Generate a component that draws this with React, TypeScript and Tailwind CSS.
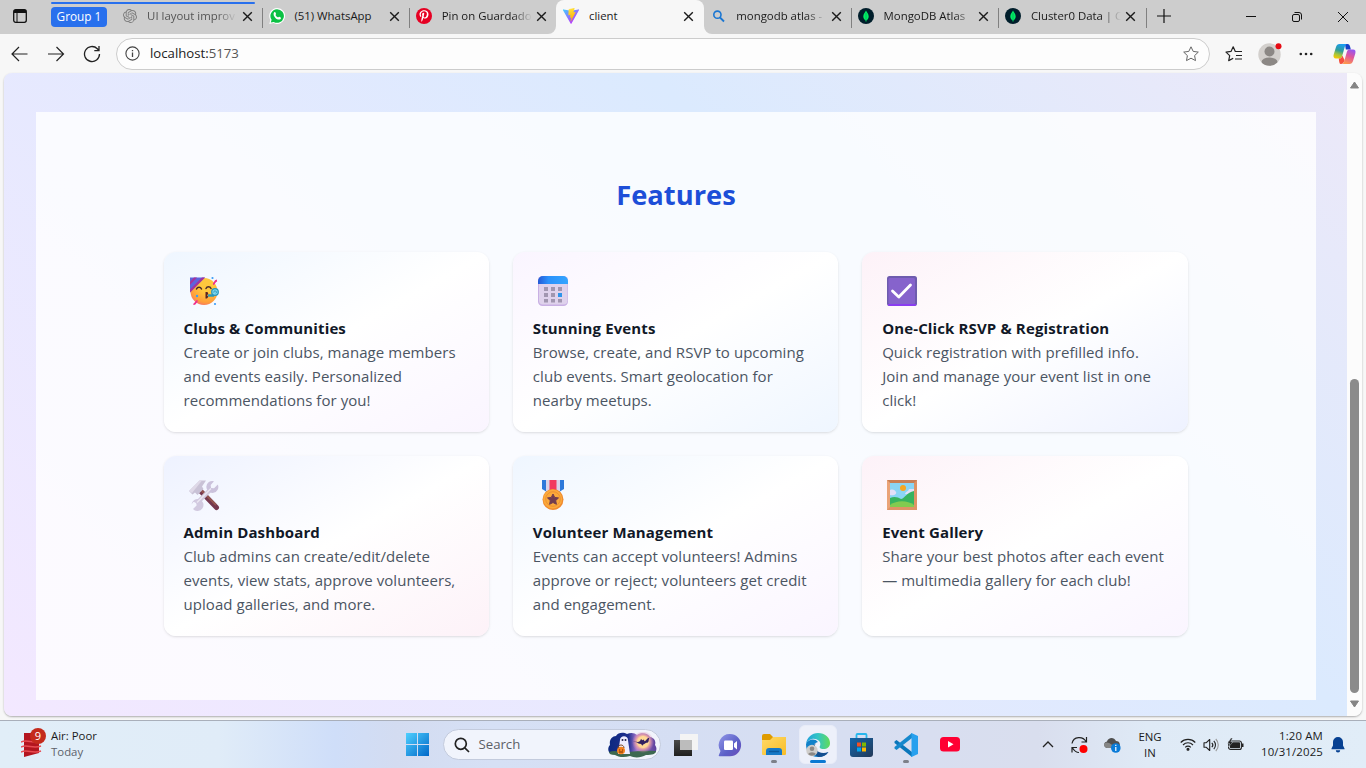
import React from "react";
import { FaWhatsapp, FaPinterestP } from "react-icons/fa";
import { SiOpenai } from "react-icons/si";

const CloseX = () => (
  <svg width="11" height="11" viewBox="0 0 11 11" className="shrink-0">
    <path d="M1.2 1.2 9.8 9.8M9.8 1.2 1.2 9.8" stroke="#1a1a1a" strokeWidth="1.4" fill="none" />
  </svg>
);

const ViteLogo = () => (
  <svg width="16" height="16" viewBox="0 0 32 32">
    <defs>
      <linearGradient id="va" x1="0" y1="0" x2="0.7" y2="0.9">
        <stop offset="0" stopColor="#41d1ff" />
        <stop offset="1" stopColor="#bd34fe" />
      </linearGradient>
      <linearGradient id="vb" x1="0.4" y1="0" x2="0.6" y2="1">
        <stop offset="0" stopColor="#ffea83" />
        <stop offset="0.1" stopColor="#ffdd35" />
        <stop offset="1" stopColor="#ffa800" />
      </linearGradient>
    </defs>
    <path d="M31.9 4.4 17 31.2a1 1 0 0 1-1.8 0L0 4.4a1 1 0 0 1 1.1-1.6L16 5.5l14.8-2.7a1 1 0 0 1 1.1 1.6z" fill="url(#va)" />
    <path d="M22.7 0 11.7 2.2a.4.4 0 0 0-.3.4l-.7 11.6a.4.4 0 0 0 .5.4l3.1-.7c.3 0 .5.2.5.5l-.9 4.5c-.1.3.2.6.5.5l1.9-.6c.3 0 .6.2.5.5l-1.500 7c0 .5.5.7.8.3l9-18c.2-.3-.1-.6-.4-.6l-3.200.6c-.3.1-.6-.2-.5-.5l2.100-7.200c.1-.3-.2-.6-.4-.9z" fill="url(#vb)" />
  </svg>
);

const MongoLogo = () => (
  <svg width="16" height="16" viewBox="0 0 16 16">
    <circle cx="8" cy="8" r="8" fill="#001e2b" />
    <path d="M8 2.4C9 4.5 10.7 5.8 10.7 8.5 10.7 10.7 9.3 11.8 8.3 12.5V13.8H7.7V12.5C6.7 11.8 5.3 10.7 5.3 8.5 5.3 5.8 7 4.5 8 2.4Z" fill="#00ed64" />
    <path d="M8 5v7.5" stroke="#00a35c" strokeWidth=".6" />
  </svg>
);

const WhatsLogo = () => (
  <svg width="16" height="16" viewBox="0 0 16 16">
    <path d="M8 0a8 8 0 1 1-3.600 15.100L.3 16l1-4A8 8 0 0 1 8 0z" fill="#fff" />
    <path d="M8 1.200a6.800 6.800 0 1 1-3.300 12.700l-2.900.7.800-2.800A6.800 6.800 0 0 1 8 1.200z" fill="#0bc144" />
    <path d="M5.200 4.300c.6-.5 1.100-.3 1.300.2l.5 1.200c.2.500-.5.800-.5 1.200.5 1.200 1.400 2 2.600 2.500.4 0 .7-.8 1.200-.6l1.400.7c.5.300.3 1.300-.3 1.700-1.500 1-3.600 0-5-1.300C4.900 8.500 3.800 5.900 5.200 4.300z" fill="#fff" />
  </svg>
);

const PinLogo = () => (
  <span className="flex h-4 w-4 items-center justify-center rounded-full bg-[#e60023] text-white">
    <FaPinterestP size={12} />
  </span>
);

const FindLogo = () => (
  <svg width="16" height="16" viewBox="0 0 16 16">
    <circle cx="6.4" cy="6.7" r="3.6" fill="none" stroke="#1a76d2" strokeWidth="1.6" />
    <path d="m9 9.5 4 4" stroke="#1a76d2" strokeWidth="1.8" />
  </svg>
);

type TabData = { title: string; icon: React.ReactNode; active?: boolean; line?: boolean; muted?: boolean };

const tabs: TabData[] = [
  { title: "UI layout improv", icon: <SiOpenai size={14} color="#7c7c7c" />, muted: true },
  { title: "(51) WhatsApp", icon: <WhatsLogo />, line: true },
  { title: "Pin on Guardado", icon: <PinLogo />, line: true },
  { title: "client", icon: <ViteLogo />, active: true },
  { title: "mongodb atlas -", icon: <FindLogo /> },
  { title: "MongoDB Atlas", icon: <MongoLogo />, line: true },
  { title: "Cluster0 Data | C", icon: <MongoLogo />, line: true },
];

function Tab({ t }: { t: TabData }) {
  const faded = t.title !== "(51) WhatsApp" && !t.active;
  return (
    <div className={`relative flex h-[34px] w-[147.3px] shrink-0 items-start ${t.active ? "rounded-t-lg bg-[#f7f7f7]" : ""}`}>
      {t.active && (
        <>
          <svg className="absolute bottom-0 -left-2" width="8" height="8"><path d="M8 0v8H0a8 8 0 0 0 8-8z" fill="#f7f7f7" /></svg>
          <svg className="absolute -right-2 bottom-0" width="8" height="8"><path d="M0 0v8h8a8 8 0 0 1-8-8z" fill="#f7f7f7" /></svg>
        </>
      )}
      <span className={`mt-2 h-5 w-px shrink-0 ${t.line ? "bg-[#808080]" : "bg-transparent"}`} />
      <span className="mt-2 ml-1.5 flex h-4 w-4 shrink-0 items-center justify-center">{t.icon}</span>
      <span className={`mt-1.5 ml-[9.5px] w-[90px] shrink-0 text-[11.4px] leading-5 whitespace-nowrap ${faded ? "[mask-image:linear-gradient(to_right,black_78%,transparent_100%)]" : ""} ${t.muted ? "text-[#555]" : "text-[#1a1a1a]"}`}>
        {t.title}
      </span>
      <span className="mt-[11px] ml-[4.5px]"><CloseX /></span>
    </div>
  );
}

const Party = () => (
  <svg width="32" height="32" viewBox="0 0 32 32">
    <defs>
      <radialGradient id="pf" cx=".6" cy=".3" r=".8"><stop offset=".3" stopColor="#ffc83d" /><stop offset=".75" stopColor="#ff9f3a" /><stop offset="1" stopColor="#f3607a" /></radialGradient>
    </defs>
    <circle cx="16" cy="16.5" r="13.5" fill="url(#pf)" />
    <path d="M2 2.5h15L2 17.5z" fill="#5d63dd" />
    <path d="M6 2.5 2 7v3l7-7.500zM14 2.5 2 14.5v3l15-15z" fill="#a5339b" />
    <path d="M8.500 14c1-2.5 4-2.5 5 0M18 13.5c1-2.5 4-2.5 5 0" stroke="#4a2a2a" strokeWidth="1.5" fill="none" strokeLinecap="round" />
    <path d="M17.500 17c3-.5 3.5 2 1.500 3.2 2 1 1 3.500-1.500 3.300z" fill="#5a2323" />
    <path d="M20 20.5h6" stroke="#2b9ab8" strokeWidth="2.500" />
    <circle cx="27" cy="17" r="3.3" fill="#7fd6ec" stroke="#2496bd" strokeWidth="1.2" />
    <path d="M25.800 17.500a1.300 1.300 0 1 1 2 .8" stroke="#2496bd" fill="none" />
    <path d="M25 9c2 0 1-3 4-3.500M5.500 29c2.500.5 2-3 4-3" stroke="#ef2f8c" strokeWidth="1.8" fill="none" />
    <circle cx="24.5" cy="3" r="1.1" fill="#3b9cf5" /><circle cx="27" cy="29" r="1.1" fill="#3b9cf5" /><circle cx="9" cy="21" r="1.2" fill="#3b9cf5" />
  </svg>
);

const CalendarArt = () => (
  <svg width="32" height="32" viewBox="0 0 32 32">
    <defs><linearGradient id="ca"><stop offset="0" stopColor="#2459d6" /><stop offset=".35" stopColor="#2b91fb" /><stop offset="1" stopColor="#35a5ff" /></linearGradient></defs>
    <rect x="1" y="1" width="30" height="30" rx="4.5" fill="#c9b0e4" />
    <rect x="2" y="2" width="28.5" height="27.5" rx="4" fill="#dfd2ec" />
    <path d="M1 9V6a5 5 0 0 1 5-5h20a5 5 0 0 1 5 5v3z" fill="url(#ca)" />
    <path d="M7 12h4v4H7zM14 12h4v4h-4zM21 12h4v4h-4zM7 18h4v4H7zM14 18h4v4h-4zM7 24h4v3.5H7zM14 24h4v3.5h-4zM21 24h4v3.5h-4z" fill="#a196b0" />
    <path d="M21 18h4v4h-4z" fill="#2f94ea" />
  </svg>
);

const CheckArt = () => (
  <svg width="32" height="32" viewBox="0 0 32 32">
    <rect x="1" y="1" width="30" height="30" rx="2.5" fill="#6e5cae" />
    <rect x="2.5" y="3" width="26.5" height="26" rx="1.5" fill="#8663cc" />
    <path d="M2 29h28v.5a1.500 1.500 0 0 1-1.500 1.500h-25A1.500 1.500 0 0 1 2 29.5z" fill="#8a3df0" />
    <path d="m6.500 16 6.300 6L24.500 10" stroke="#fff" strokeWidth="2.8" fill="none" strokeLinecap="round" strokeLinejoin="round" />
  </svg>
);

const ToolsArt = () => (
  <svg width="32" height="32" viewBox="0 0 32 32">
    <path d="M13 12.500 28.500 28.500" stroke="#75384f" strokeWidth="5" strokeLinecap="round" />
    <path d="m13 11 15 15" stroke="#95554f" strokeWidth="1.800" />
    <path d="M1 12 11.500 1.500H18l-4 6 1.500 2.500-6 6-2.500-2.500-2.500 2z" fill="#c9c2d6" />
    <path d="M1 12 11.500 1.500H14L4 14z" fill="#dfd9e8" />
    <path d="M8.500 24.500 23.500 9.500" stroke="#d3cbe0" strokeWidth="4.500" />
    <path d="M29.800 5.500 26 9.300l-3-.300-.3-3L26 2.200a6 6 0 1 0 3.800 3.300z" fill="#cbc2dc" />
    <path d="m5 30 3.600-3.600-.3-3-3-.3L3.500 25.500A6 6 0 1 1 5 30z" fill="#d2cae0" />
    <path d="M9 23.500 23 9.500" stroke="#ebe7f2" strokeWidth="1.500" />
  </svg>
);

const MedalArt = () => (
  <svg width="32" height="32" viewBox="0 0 32 32">
    <path d="M5 1h22v9l-5 3H10l-5-3z" fill="#2e79da" />
    <path d="M9 1h14v11H9z" fill="#d9d2e8" />
    <path d="M12.500 1h7v10h-7z" fill="#f2395e" />
    <circle cx="16" cy="20.5" r="10.5" fill="#f08a2f" />
    <circle cx="15.7" cy="20" r="9.5" fill="#fba93b" />
    <circle cx="16" cy="20" r="7.3" fill="none" stroke="#ed9131" />
    <path d="m16 15 1.700 3.400 3.800.5-2.800 2.700.7 3.700-3.400-1.800-3.400 1.800.7-3.700-2.800-2.700 3.800-.5z" fill="#713c4f" stroke="#713c4f" strokeLinejoin="round" />
  </svg>
);

const FrameArt = () => (
  <svg width="32" height="32" viewBox="0 0 32 32">
    <rect x="1" y="1" width="30" height="30" fill="#de9365" />
    <path d="M1 1h30l-3 3H4z" fill="#c87f56" /><path d="M1 31V1l3 3v24z" fill="#eaa377" />
    <rect x="4" y="4" width="24" height="24" fill="#8ad5f5" />
    <circle cx="17" cy="9" r="3" fill="#f5a623" />
    <path d="M4 11c3-1 5 0 6 2s-2 4-6 3zM19 15c1-3 3-2 4-5h5v6z" fill="#e2dff8" />
    <path d="M4 19c4-2 8-1 11 1 3 0 6-7 13-8v16H4z" fill="#36b35f" />
    <path d="M4 26c7-5 17-5 24 0v2H4z" fill="#82cb4f" />
  </svg>
);

const features = [
  { icon: <Party />, bg: "from-[#eff6ff] to-[#faf5ff]", title: "Clubs & Communities", lines: ["Create or join clubs, manage members", "and events easily. Personalized", "recommendations for you!"] },
  { icon: <CalendarArt />, bg: "from-[#faf5ff] to-[#eff6ff]", title: "Stunning Events", lines: ["Browse, create, and RSVP to upcoming", "club events. Smart geolocation for", "nearby meetups."] },
  { icon: <CheckArt />, bg: "from-[#fdf2f8] to-[#eef2ff]", title: "One-Click RSVP & Registration", lines: ["Quick registration with prefilled info.", "Join and manage your event list in one", "click!"] },
  { icon: <ToolsArt />, bg: "from-[#eef2ff] to-[#fdf2f8]", title: "Admin Dashboard", lines: ["Club admins can create/edit/delete", "events, view stats, approve volunteers,", "upload galleries, and more."] },
  { icon: <MedalArt />, bg: "from-[#eff6ff] to-[#faf5ff]", title: "Volunteer Management", lines: ["Events can accept volunteers! Admins", "approve or reject; volunteers get credit", "and engagement."] },
  { icon: <FrameArt />, bg: "from-[#fdf2f8] to-[#faf5ff]", title: "Event Gallery", lines: ["Share your best photos after each event", "— multimedia gallery for each club!"] },
];

function Toolbar() {
  return (
    <div className="flex h-[39px] shrink-0 items-center bg-[#f7f7f7]">
      <div className="flex w-9 justify-end pr-2">
        <svg width="17" height="16" viewBox="0 0 17 16" fill="none" stroke="#222" strokeWidth="1.2"><path d="M16.500 8H1M8 1 1 8l7 7" /></svg>
      </div>
      <div className="ml-3 flex w-[17px]">
        <svg width="17" height="16" viewBox="0 0 17 16" fill="none" stroke="#222" strokeWidth="1.2"><path d="M0 8H15.500M8.500 1l7 7-7 7" /></svg>
      </div>
      <div className="ml-[18px] w-[18px]">
        <svg width="18" height="18" viewBox="0 0 18 18" fill="none" stroke="#222" strokeWidth="1.3"><path d="M16.500 9A7.500 7.500 0 1 1 14.300 3.700L16 5.500M16 1v4.700h-4.700" /></svg>
      </div>
      <div className="ml-[15px] flex h-8 w-[1094px] items-center rounded-full border border-[#cccccc] bg-[#fdfdfd] pr-2.5 pl-2">
        <svg width="15" height="15" viewBox="0 0 15 15" fill="none" stroke="#444"><circle cx="7.5" cy="7.5" r="6.6" strokeWidth="1.1" /><path d="M7.500 6.500v4.500M7.500 4v1.300" strokeWidth="1.3" /></svg>
        <span className="ml-[10px] pt-px text-[13.2px] text-[#222]">localhost:<span className="text-[#555]">5173</span></span>
        <svg className="ml-auto" width="16" height="16" viewBox="0 0 16 16" fill="none" stroke="#666" strokeLinejoin="round"><path d="m8 .8 2.200 4.600 5.100.7-3.700 3.500.9 5L8 12.200l-4.500 2.400.9-5L.7 6.100l5.100-.7z" /></svg>
      </div>
      <svg className="ml-[15px]" width="18" height="16" viewBox="0 0 18 16" fill="none" stroke="#222" strokeLinejoin="round"><path d="M11 5.500h-.7L8.200.8 6 5.400l-5 .7 3.700 3.500-1 5 4.500-2.400M10.500 5.500H17M11 9.500h6M10 13h7" strokeWidth="1.2" /></svg>
      <svg className="ml-[15px]" width="24" height="24" viewBox="0 0 24 24"><defs><clipPath id="av"><circle cx="11.5" cy="12.5" r="11.2" /></clipPath></defs><circle cx="11.5" cy="12.5" r="11.2" fill="#d3d0cd" /><g clipPath="url(#av)" fill="#8c8885"><circle cx="11.5" cy="9.500" r="5" /><ellipse cx="11.5" cy="20" rx="8" ry="4.500" /></g><circle cx="20.5" cy="4.300" r="3" fill="#e60b14" /></svg>
      <svg className="ml-[17px]" width="14" height="4" viewBox="0 0 14 4" fill="#222"><circle cx="1.800" cy="2" r="1.300" /><circle cx="7" cy="2" r="1.300" /><circle cx="12.200" cy="2" r="1.300" /></svg>
      <svg className="ml-[20px]" width="23" height="22" viewBox="0 0 23 22">
        <defs>
          <linearGradient id="c1" x1=".6" y1="0" x2=".3" y2="1"><stop offset="0" stopColor="#1a9df2" /><stop offset=".45" stopColor="#2f9d9a" /><stop offset=".75" stopColor="#a8c63a" /><stop offset="1" stopColor="#f6c800" /></linearGradient>
          <linearGradient id="c2" x1=".7" y1="0" x2=".3" y2="1"><stop offset="0" stopColor="#9655f2" /><stop offset=".45" stopColor="#e0559b" /><stop offset="1" stopColor="#ff9a4a" /></linearGradient>
        </defs>
        <path d="M12 1h2.500c1.500 0 2.200 1 2.700 3l.6 2.500h-5z" fill="#1541c8" />
        <path d="M6.500 1h7.300c-1.300.5-1.800 2-2.300 3.800L9.300 12.500C8.700 15 7.700 15.500 5.800 15.500H3C.8 15.500 0 14 .7 11.600L3 4C3.600 2 4.700 1 6.500 1z" fill="url(#c1)" />
        <path d="M16.500 21H9.200c1.300-.5 1.800-2 2.300-3.800l2.200-7.700c.6-2.500 1.600-3 3.500-3H20c2.200 0 3 1.500 2.300 3.900L20 18c-.6 2-1.700 3-3.500 3z" fill="url(#c2)" />
        <path d="M5.800 15.500c2 0 2.900-.5 3.500-3L11.500 17c-.6 2.500-1.600 4-3.500 4-1.500 0-1.700-1.200-2.200-5.500z" fill="#f4513f" />
      </svg>
    </div>
  );
}

const Cell = ({ children, mark }: { children: React.ReactNode; mark?: boolean }) => (
  <div className="relative flex h-[47px] w-11 shrink-0 items-center justify-center">
    {children}
    {mark && <span className="absolute bottom-[5px] left-[19px] h-[3px] w-1.5 rounded-full bg-[#7d8089]" />}
  </div>
);

function Taskbar() {
  return (
    <div className="flex h-12 items-center border-t border-[#a9afba] bg-[linear-gradient(90deg,#e1eef8_0%,#e0ecf8_16%,#cfdef9_24.5%,#d3dcf1_29%,#d6e0f5_36%,#d5def3_50%,#d8def0_68%,#d9deee_76%,#dfeaf6_84%,#e1edf8_100%)]">
      <div className="flex w-[395px] items-center pl-[21px]">
        <svg width="26" height="30" viewBox="0 0 26 30" className="-mt-1">
          <path d="M3 5h15v20L3 29z" fill="#b3151f" />
          <path d="M0 14c6-3 12 2 20-1M0 19c6-3 12 2 20-1M0 24c6-3 12 2 20-1" stroke="#e84c52" strokeWidth="1.5" fill="none" />
          <circle cx="17" cy="8" r="8" fill="#c42b1c" />
          <text x="17" y="12" textAnchor="middle" fontSize="11" fill="#fff">9</text>
        </svg>
        <div className="-mt-0.5 ml-1 text-[11.4px] leading-4">
          <div className="text-[#1b1b1b]">Air: Poor</div>
          <div className="text-[#5d626a]">Today</div>
        </div>
      </div>
      <Cell>
        <svg width="23" height="23" viewBox="0 0 23 23"><defs><linearGradient id="w" x1="0" y1="0" x2="23" y2="23" gradientUnits="userSpaceOnUse"><stop offset="0" stopColor="#4fd0ff" /><stop offset="1" stopColor="#0067c8" /></linearGradient></defs><path d="M0 0h11v11H0zM12 0h11v11H12zM0 12h11v11H0zM12 12h11v11H12z" fill="url(#w)" /></svg>
      </Cell>
      <div className="ml-[3.500px] flex h-[31px] w-[218px] items-center rounded-full border border-[#c3cbdd] bg-[#f1f4fc] pl-2.5">
        <svg width="16" height="16" viewBox="0 0 16 16" fill="none" stroke="#222" strokeWidth="1.7"><circle cx="6.800" cy="6.800" r="5.500" /><path d="m10.800 10.800 4.200 4.200" /></svg>
        <span className="ml-[9px] text-[13.200px] text-[#5c5f66]">Search</span>
        <svg className="mr-[3px] ml-auto" width="49" height="26" viewBox="0 0 49 26">
          <defs>
            <linearGradient id="hn"><stop offset="0" stopColor="#0c2880" /><stop offset=".42" stopColor="#1f2f8e" /><stop offset=".6" stopColor="#a97ad0" /><stop offset="1" stopColor="#5a409b" /></linearGradient>
            <radialGradient id="hm"><stop offset=".5" stopColor="#ffd894" /><stop offset=".65" stopColor="#f3a9a0" stopOpacity=".8" /><stop offset="1" stopColor="#d98cc0" stopOpacity="0" /></radialGradient>
          </defs>
          <path d="M3 22C-1 19 0 15 2 13 1 8 4 4 8 4c2-4 8-4 11-2 4-2 8-1 10 1 4-3 11-2 13 2 5 1 6 5 5 8 3 4 1 8-3 9z" fill="url(#hn)" />
          <path d="M1 20c6-2 10 0 16 0s14-2 31-1c0 3-4 4-10 4-5 3-12 3-16 1-6 2-12 1-15-1-4 0-6-1-6-3z" fill="#3d6850" />
          <circle cx="35" cy="10" r="11" fill="url(#hm)" />
          <path d="M25 10c3-1 5 1 7-1l1-2 1.500 1.200L36 7.500l.3 1.800c2 0 2-3 5-3.500-1 3 0 5-3 5-1 1-3 1-4 3-1-2-2-2-3-2s-1.500-2-6-1.800z" fill="#31215f" />
          <path d="M12 8c0-5 8-5 8 0l2 14h-12z" fill="#eeecff" />
          <circle cx="14.5" cy="8" r="1" fill="#20204a" /><circle cx="17.5" cy="8" r="1" fill="#20204a" />
          <ellipse cx="13" cy="18.5" rx="4" ry="3.800" fill="#f58220" /><path d="M10 16c0-4 6-4 6 0" stroke="#7a4a28" fill="none" /><path d="M11 18h1.200M14 18h1.200M11 20h4" stroke="#7a2e00" />
        </svg>
      </div>
      <div className="ml-[3px] flex">
        <Cell><svg width="24" height="22" viewBox="0 0 24 22"><defs><linearGradient id="tv" x1="0" y1="0" x2="0" y2="1"><stop offset="0" stopColor="#4a4a4a" /><stop offset="1" stopColor="#1f1f1f" /></linearGradient></defs><path d="M0 6h18v16H0z" fill="url(#tv)" /><path d="M6 0h18v16H6z" fill="#f4f4f4" /><path d="M6 6h12v10H6z" fill="#bcbcbc" /></svg></Cell>
        <Cell><svg width="24" height="24" viewBox="0 0 24 24"><defs><linearGradient id="ch" x1="0" y1="0" x2="1" y2="1"><stop offset="0" stopColor="#9197e8" /><stop offset=".6" stopColor="#5b5fc7" /><stop offset="1" stopColor="#6c4bb8" /></linearGradient></defs><path d="M12 1a11 11 0 1 1 0 22.200H1.500c-.8 0-1-.6-.6-1.200L2.500 18A11 11 0 0 1 12 1z" fill="url(#ch)" /><rect x="6" y="7.500" width="9" height="9.500" rx="1.200" fill="#fff" /><path d="m16 10.500 3-2.500v8.500L16 14z" fill="#fff" /></svg></Cell>
        <Cell mark><svg width="24" height="22" viewBox="0 0 24 22"><path d="M0 2a2 2 0 0 1 2-2h6l3 3v4H0z" fill="#df9b00" /><defs><linearGradient id="fo" x1="0" y1="0" x2="1" y2="1"><stop offset="0" stopColor="#ffd968" /><stop offset="1" stopColor="#f8bd27" /></linearGradient></defs><path d="M0 6h8l3-3h13v17a1 1 0 0 1-1 1H1a1 1 0 0 1-1-1z" fill="url(#fo)" /><path d="M4 21v-4a3 3 0 0 1 3-3h10a3 3 0 0 1 3 3v4z" fill="#1679c7" /><path d="M7.500 17.500h9" stroke="#0a5a9f" strokeWidth="1.5" strokeLinecap="round" /></svg></Cell>
        <Cell>
          <span className="relative flex h-[39px] w-[38px] items-center justify-center rounded-md border border-[#e8ecf8] bg-[#edf0fa]">
            <svg width="24" height="24" viewBox="0 0 24 24">
              <defs><linearGradient id="e1"><stop offset="0" stopColor="#21a0dc" /><stop offset=".5" stopColor="#33c5c4" /><stop offset="1" stopColor="#61dc58" /></linearGradient></defs>
              <path d="M0 11C1 4 6 0 12 0c7 0 12 4.500 12 10 0 4-3 6-6.500 6s-4.500-1.500-3.500-3c2-5-4-8-8-7C3 6.800 1 9 0 11z" fill="url(#e1)" />
              <path d="M0 11c2-5 9-6 12-2-4 1-5 4-4 7 2 5 8 7 14 3-2 3.500-5.500 5-10 5C4 24 0 19 0 11z" fill="#1181c9" />
              <path d="M10 10c-4 5 3 13 12.500 9-2 3.500-5.500 5-10 5C7 22 5 13 10 10z" fill="#144f90" />
              <circle cx="6" cy="17.500" r="5.700" fill="#cfcdcb" /><circle cx="6" cy="15.800" r="2.300" fill="#8c8885" /><path d="M2 21a4.500 3 0 0 1 8 0 5.700 5.700 0 0 1-8 0z" fill="#8c8885" />
            </svg>
            <span className="absolute bottom-0 left-[10px] h-[3px] w-4 rounded-full bg-[#0b79d3]" />
          </span>
        </Cell>
        <Cell><svg width="23" height="24" viewBox="0 0 23 24"><defs><linearGradient id="st" x1="0" y1="0" x2="1" y2="1"><stop offset="0" stopColor="#1267ac" /><stop offset="1" stopColor="#233857" /></linearGradient></defs><path d="M6.500 6V2a1 1 0 0 1 1-1h8a1 1 0 0 1 1 1v4" stroke="#27b7ed" strokeWidth="1.8" fill="none" /><path d="M0 5h23v16a3 3 0 0 1-3 3H3a3 3 0 0 1-3-3z" fill="url(#st)" /><path d="M7 9.500h4v4H7z" fill="#f25022" /><path d="M12 9.500h4v4h-4z" fill="#7fba00" /><path d="M7 14.500h4v4H7z" fill="#00a4ef" /><path d="M12 14.500h4v4h-4z" fill="#ffb900" /></svg></Cell>
        <Cell mark><svg width="24" height="24" viewBox="0 0 24 24"><path d="M.5 8.500 2.500 7 18 19v5L.5 10z" fill="#0a76ba" /><path d="M.5 15.500 2.500 17 18 5V0L.5 14z" fill="#1688cc" /><path d="M17.500 0 24 3v18l-6.500 3c-.5 0-.7-.5 0-1.500V1.500c-.5-1 0-1.500 0-1.500z" fill="#27a0ee" /></svg></Cell>
        <Cell><svg width="20" height="15" viewBox="0 0 20 15"><rect width="20" height="14.500" rx="3.500" fill="#ff0033" /><path d="m8 4 5.500 3.200L8 10.500z" fill="#fff" /></svg></Cell>
      </div>
      <div className="ml-auto flex items-center pr-[13px] text-[11.4px] leading-4 text-[#1b1b1b]">
        <div className="flex w-7 justify-center"><svg width="12" height="7" viewBox="0 0 12 7" fill="none" stroke="#222" strokeWidth="1.300"><path d="m1 6 5-5 5 5" /></svg></div>
        <div className="flex w-[34px] justify-center"><svg width="17" height="18" viewBox="0 0 17 18" fill="none" stroke="#222" strokeWidth="1.200"><path d="M1 7.500C2.500 0 12 0 15 5.500M15.500 1v5h-5M8 16.500c-3 0-5-2-6.500-4.500M1 16.500v-5h5" /><circle cx="12.500" cy="13" r="4" fill="#f00" stroke="none" /></svg></div>
        <div className="flex w-8 justify-center"><svg width="17" height="16" viewBox="0 0 17 16"><path d="M3 11a3.300 3.300 0 0 1 0-6.500C4 .5 10-.5 12 4c4 0 4 3 4 7z" fill="#505050" /><path d="M1 6c4-2 7 3 12 5H3C0 10-1 7 1 6z" fill="#858585" /><circle cx="11.800" cy="11" r="4.800" fill="#0a7bd8" /><path d="M11.800 10v4M11.800 7.800V9" stroke="#fff" strokeWidth="1.200" /></svg></div>
        <div className="w-11 text-center">ENG<br />IN</div>
        <div className="flex w-[31px] justify-center"><svg width="16" height="13" viewBox="0 0 16 13" fill="none" stroke="#222" strokeWidth="1.100"><path d="M.7 4.500c4-4.200 10.600-4.200 14.600 0M3 7c2.800-3 7.200-3 10 0M5.200 9.400c1.600-1.700 4-1.700 5.600 0" /><circle cx="8" cy="11.200" r="1" fill="#222" /></svg></div>
        <div className="flex w-4 justify-center"><svg width="16" height="14" viewBox="0 0 16 14" fill="none" stroke="#222" strokeWidth="1.100" strokeLinejoin="round"><path d="M1 4.700h2.300L6.700 1.500v11L3.300 9.300H1zM8.800 4.800c1.200 1.200 1.200 3.200 0 4.400M10.800 2.800c2.200 2.300 2.200 6.100 0 8.400" /><path d="M12.800 1c3.300 3.400 3.300 8.600 0 12" stroke="#999" /></svg></div>
        <div className="flex w-[33px] justify-center"><svg width="17" height="14" viewBox="0 0 17 14"><rect x="1.600" y="3" width="12.800" height="8.500" rx="2" fill="none" stroke="#222" strokeWidth="1.100" /><rect x="3" y="4.300" width="10" height="5.900" rx=".6" fill="#222" /><path d="M15 5.500h1.500v3.500H15z" fill="#222" /><path d="M4 0 .5 5.500h2L1.500 9 6 3.800H3.800L5.500 0z" fill="#222" stroke="#dfeaf6" strokeWidth=".4" /></svg></div>
        <div className="-mt-px w-[71px] text-right tracking-[0.15px] whitespace-nowrap">1:20 AM<br />10/31/2025</div>
        <div className="flex w-[30px] justify-center"><svg width="14" height="16" viewBox="0 0 14 16" fill="#064092"><path d="M7 0a5 5 0 0 1 5 5v3.500l1.500 3v.8H.5v-.8l1.500-3V5a5 5 0 0 1 5-5zM4.800 13.300h4.400a2.200 2.200 0 0 1-4.400 0z" /></svg></div>
      </div>
    </div>
  );
}

export default function App() {
  return (
    <div className="flex h-[768px] w-[1366px] flex-col overflow-hidden bg-[#f7f7f7] font-['Open_Sans','Noto_Sans',sans-serif]">
      <div className="flex h-[34px] shrink-0 items-start bg-[#cdcdcd]">
        <div className="relative flex w-[114.600px] shrink-0 items-start pl-[13px]">
          <svg className="mt-[9px]" width="14" height="14" viewBox="0 0 14 14"><rect x=".7" y=".7" width="12.600" height="12.600" rx="2" fill="none" stroke="#111" strokeWidth="1.300" /><path d="M1 1h12v3H1z" fill="#111" /><path d="M4 4v9" stroke="#111" /></svg>
          <span className="mt-[7px] ml-6 flex h-5 w-14 items-center justify-center rounded-[4px] bg-[#2870ed] text-[11.800px] text-white">Group 1</span>
          <span className="absolute top-[2px] left-[51px] h-[2px] w-[204px] rounded-full bg-[#2870ed]" />
        </div>
        {tabs.map((t) => <Tab key={t.title} t={t} />)}
        <span className="mt-2 h-5 w-px bg-[#808080]" />
        <svg className="mt-[9px] ml-[10px]" width="14" height="14" viewBox="0 0 14 14"><path d="M7 0v14M0 7h14" stroke="#111" strokeWidth="1.200" /></svg>
        <div className="mt-3 mr-[18px] ml-auto flex items-center gap-9">
          <svg width="10" height="10"><path d="M0 4.500h10" stroke="#111" /></svg>
          <svg width="10" height="10" viewBox="0 0 10 10" fill="none" stroke="#111"><rect x=".5" y="2.500" width="7" height="7" rx="1.500" /><path d="M2.500.5H7A2.500 2.500 0 0 1 9.500 3v4.500" /></svg>
          <svg width="10" height="10" viewBox="0 0 10 10" stroke="#111"><path d="m0 0 10 10M10 0 0 10" /></svg>
        </div>
      </div>
      <Toolbar />
      <div className="mx-1 flex h-[643px] shrink-0 overflow-hidden rounded-lg shadow-[0_1px_2px_rgba(0,0,0,0.3)]">
        <main className="w-[1343px] shrink-0 bg-[linear-gradient(to_top_right,#f3e8ff,#dbeafe,#fce7f3)] bg-[length:1343px_1238px] bg-bottom bg-no-repeat px-8 pt-[39px] pb-4">
          <section className="flex h-[588px] w-[1280px] flex-col items-center bg-white/80 pt-[63px]">
            <h2 className="text-[27.300px] leading-10 font-bold text-[#1d4ed8]">Features</h2>
            <div className="mt-[37px] mr-px grid w-[1024px] grid-cols-3 gap-6">
              {features.map((f) => (
                <article key={f.title} className={`h-[180px] rounded-xl bg-[linear-gradient(to_bottom_right,var(--tw-gradient-from),#fff,var(--tw-gradient-to))] p-5 shadow-[0_1px_3px_rgba(0,0,0,0.1),0_1px_2px_-1px_rgba(0,0,0,0.1)] ${f.bg}`}>
                  <div className="h-11 pt-[3px] pl-1">{f.icon}</div>
                  <h3 className="text-[15px] leading-6 font-bold tracking-[0.13px] whitespace-nowrap text-[#111827]">{f.title}</h3>
                  <p className="text-[15px] leading-6 tracking-[0.05px] whitespace-nowrap text-[#4b5563]">
                    {f.lines.map((l) => <span key={l} className="block">{l}</span>)}
                  </p>
                </article>
              ))}
            </div>
          </section>
        </main>
        <div className="flex w-[15px] shrink-0 flex-col items-center bg-[#fcfcfc] pt-2">
          <svg width="9" height="8" viewBox="0 0 9 8"><path d="M4.500 1 8.500 7h-8z" fill="#858585" stroke="#858585" strokeLinejoin="round" /></svg>
          <span className="mt-[290px] h-[314px] w-[9px] shrink-0 rounded-full bg-[#8b8b8b]" />
          <svg className="mt-[7px]" width="9" height="8" viewBox="0 0 9 8"><path d="M4.500 7 8.500 1h-8z" fill="#858585" stroke="#858585" strokeLinejoin="round" /></svg>
        </div>
      </div>
      <div className="mt-1 shrink-0"><Taskbar /></div>
    </div>
  );
}
